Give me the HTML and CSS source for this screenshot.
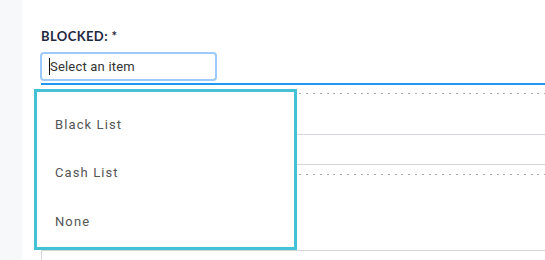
FILE: index.html
```html
<!DOCTYPE html>
<html>
<head>
<meta charset="utf-8">
<link rel="stylesheet" href="styles.css">
</head>
<body>
<div class="page">
  <aside class="sidebar"></aside>
  <main class="main">
    <label class="field-label">BLOCKED: *</label>
    <div class="select-wrap">
      <div class="select-input"><span class="caret"></span><span class="placeholder">Select an item</span></div>
      <div class="dropdown">
        <div class="option">Black List</div>
        <div class="option">Cash List</div>
        <div class="option">None</div>
      </div>
    </div>
    <div class="tab-bar"></div>
    <div class="table">
      <div class="row row-first">
        <div class="dots"></div>
      </div>
      <div class="row row-mid"></div>
      <div class="row row-third">
        <div class="dots"></div>
      </div>
      <div class="below"></div>
    </div>
  </main>
</div>
</body>
</html>
```
FILE: styles.css
```css
* { box-sizing: border-box; }
html, body { margin: 0; padding: 0; background: #fff; }
body { width: 545px; height: 260px; overflow: hidden; }
.page { display: flex; height: 260px; }
.sidebar { width: 22px; flex: none; background: #f7f8fa; }
.main { flex: 1; padding: 29px 0 0 18px; position: relative; }
.field-label {
  display: block;
  padding-left: 1px;
  font-family: Lato, "Liberation Sans", sans-serif;
  font-weight: 700;
  font-size: 13px;
  line-height: 15px;
  letter-spacing: 0.4px;
  color: #1f2840;
}
.select-wrap { position: relative; margin-top: 8px; }
.select-input {
  width: 177px;
  height: 29px;
  border: 2px solid #9ccafd;
  border-radius: 4px;
  display: flex;
  align-items: center;
  padding-left: 7px;
  font-family: Roboto, "Liberation Sans", sans-serif;
  font-size: 13px;
  letter-spacing: 0.2px;
  color: #333;
}
.caret { width: 1px; height: 17px; background: #111; }
.dropdown {
  position: absolute;
  left: -6px;
  top: 37px;
  width: 263px;
  height: 161px;
  border: 3px solid #45c1d6;
  background: #fff;
  padding: 8px 0 0 18px;
  z-index: 2;
}
.option {
  height: 48.5px;
  display: flex;
  align-items: center;
  font-family: Roboto, "Liberation Sans", sans-serif;
  font-size: 13px;
  letter-spacing: 1.1px;
  color: #555;
}
.tab-bar { height: 2px; background: #2196f3; margin: 2px 0 0 1px; }
.table { margin-left: 1px; }
.row { position: relative; }
.dots {
  height: 1px;
  background: repeating-linear-gradient(to right, #a9a9a9 0 2px, transparent 2px 6.8px);
}
.row-first { padding-top: 8px; height: 50px; border-bottom: 1px solid #d3d5da; }
.row-mid { height: 30px; border-bottom: 1px solid #d3d5da; }
.row-third { padding-top: 9px; height: 86px; border-bottom: 1px solid #d3d5da; }
.below { height: 20px; border-left: 1px solid #d3d5da; }
```
